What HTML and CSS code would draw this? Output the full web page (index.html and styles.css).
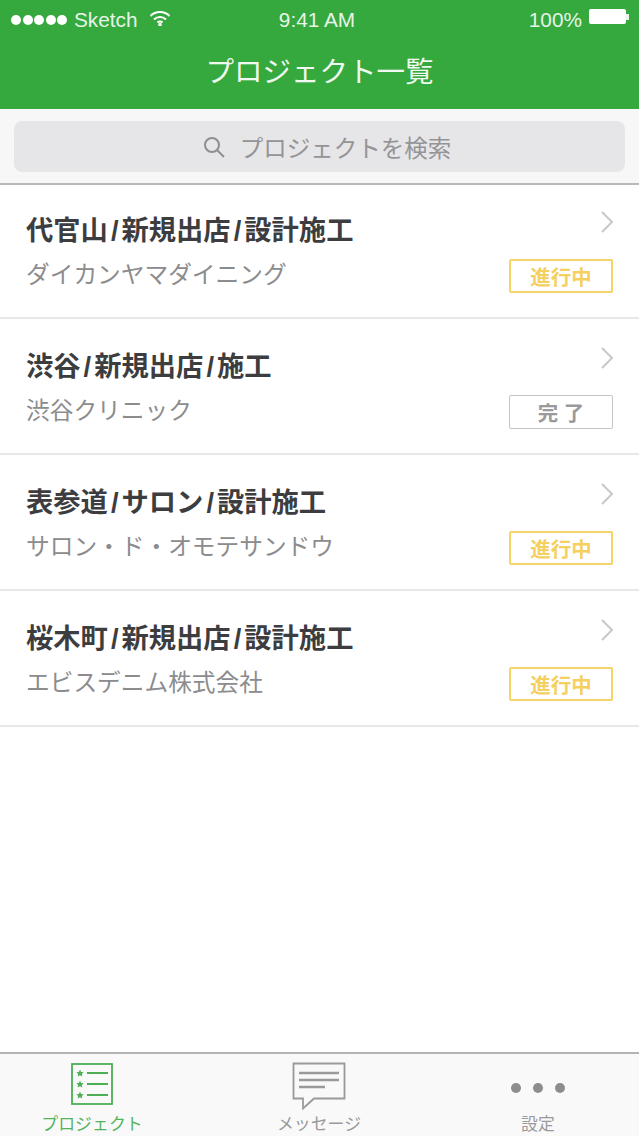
FILE: index.html
```html
<!DOCTYPE html>
<html lang="ja">
<head>
  <meta charset="UTF-8" />
  <title>プロジェクト一覧</title>
  <link rel="stylesheet" href="styles.css">
</head>
<body>
  <div class="app">
    <div class="header">
      <div class="status">
        <div class="status-left">
          <span class="dots"><i></i><i></i><i></i><i></i><i></i></span>
          <span>Sketch</span>
          <svg class="wifi" width="22" height="16" viewBox="0 0 22 16" fill="none" stroke="#fff" stroke-width="2">
            <path d="M1.500 6a13.500 13.500 0 0 1 19 0"/>
            <path d="M5 9.500a8.500 8.500 0 0 1 12 0"/>
            <path d="M8.500 12.500a3.500 3.500 0 0 1 5 0"/>
            <circle cx="11" cy="14.500" r="0.800" fill="#fff"/>
          </svg>
        </div>
        <div class="status-time">9:41 AM</div>
        <div class="status-right">
          <span>100%</span>
          <span class="battery"></span>
          <span class="battery-tip"></span>
        </div>
      </div>
      <h1 class="title">プロジェクト一覧</h1>
    </div>

    <div class="search-wrap">
      <div class="search">
        <svg width="24" height="24" viewBox="0 0 24 24" fill="none" stroke="#8e8e90" stroke-width="2">
          <circle cx="10" cy="10" r="7"/>
          <path d="M15 15l7 7"/>
        </svg>
        <span>プロジェクトを検索</span>
      </div>
    </div>

    <ul class="list">
      <li class="item">
        <div class="item-text">
          <div class="item-title">代官山<span class="slash">/</span>新規出店<span class="slash">/</span>設計施工</div>
          <div class="item-sub">ダイカンヤマダイニング</div>
        </div>
        <div class="item-side">
          <svg class="chevron" width="14" height="24" viewBox="0 0 14 24" fill="none" stroke="#c8c8cc" stroke-width="2"><path d="M2 2l10 10L2 22"/></svg>
          <span class="tag tag-active">進行中</span>
        </div>
      </li>
      <li class="item">
        <div class="item-text">
          <div class="item-title">渋谷<span class="slash">/</span>新規出店<span class="slash">/</span>施工</div>
          <div class="item-sub">渋谷クリニック</div>
        </div>
        <div class="item-side">
          <svg class="chevron" width="14" height="24" viewBox="0 0 14 24" fill="none" stroke="#c8c8cc" stroke-width="2"><path d="M2 2l10 10L2 22"/></svg>
          <span class="tag tag-done">完 了</span>
        </div>
      </li>
      <li class="item">
        <div class="item-text">
          <div class="item-title">表参道<span class="slash">/</span>サロン<span class="slash">/</span>設計施工</div>
          <div class="item-sub">サロン・ド・オモテサンドウ</div>
        </div>
        <div class="item-side">
          <svg class="chevron" width="14" height="24" viewBox="0 0 14 24" fill="none" stroke="#c8c8cc" stroke-width="2"><path d="M2 2l10 10L2 22"/></svg>
          <span class="tag tag-active">進行中</span>
        </div>
      </li>
      <li class="item">
        <div class="item-text">
          <div class="item-title">桜木町<span class="slash">/</span>新規出店<span class="slash">/</span>設計施工</div>
          <div class="item-sub">エビスデニム株式会社</div>
        </div>
        <div class="item-side">
          <svg class="chevron" width="14" height="24" viewBox="0 0 14 24" fill="none" stroke="#c8c8cc" stroke-width="2"><path d="M2 2l10 10L2 22"/></svg>
          <span class="tag tag-active">進行中</span>
        </div>
      </li>
    </ul>

    <div class="tabbar">
      <div class="tab tab-on">
        <svg class="tab-icon" width="44" height="44" viewBox="0 0 44 44" fill="none" stroke="#4cae55">
          <rect x="2" y="2" width="40" height="40" stroke-width="1.800"/>
          <path d="M17 11h21M17 22h21M17 33h21" stroke-width="1.800"/>
          <path d="M10 7.500l1.100 2.400 2.600.3-1.900 1.800.5 2.600L10 13.300l-2.300 1.300.5-2.600-1.900-1.800 2.600-.3z" fill="#4cae55" stroke="none"/>
          <path d="M10 18.500l1.100 2.400 2.600.3-1.900 1.800.5 2.600L10 24.300l-2.300 1.300.5-2.600-1.900-1.800 2.600-.3z" fill="#4cae55" stroke="none"/>
          <path d="M10 29.500l1.100 2.400 2.600.3-1.900 1.800.5 2.600L10 35.300l-2.300 1.300.5-2.600-1.900-1.800 2.600-.3z" fill="#4cae55" stroke="none"/>
        </svg>
        <span>プロジェクト</span>
      </div>
      <div class="tab">
        <svg class="tab-icon" width="54" height="48" viewBox="0 0 54 48" fill="none" stroke="#9a9a9c">
          <path d="M1.500 1.500h51v35H22l-11 10v-10H1.500z" stroke-width="1.800"/>
          <path d="M7 11h40M7 18h40M7 25h26" stroke-width="2.400"/>
        </svg>
        <span>メッセージ</span>
      </div>
      <div class="tab">
        <div class="more"><i></i><i></i><i></i></div>
        <span>設定</span>
      </div>
    </div>
  </div>
</body>
</html>
```

FILE: styles.css
```css
* {
  box-sizing: border-box;
}
html, body {
  margin: 0;
  padding: 0;
}
body {
  font-family: "Liberation Sans", "Noto Sans CJK JP", sans-serif;
  background: #fff;
  color: #3c3c3c;
}
.app {
  width: 639px;
  height: 1136px;
  display: flex;
  flex-direction: column;
  overflow: hidden;
}

/* header */
.header {
  height: 109px;
  background: #35a83e;
  color: #fff;
  flex-shrink: 0;
}
.status {
  height: 40px;
  display: grid;
  grid-template-columns: 1fr auto 1fr;
  align-items: center;
  padding: 0 10px 0 11px;
  font-size: 20.800px;
  color: #e6f5e7;
}
.status-left {
  display: flex;
  align-items: center;
  gap: 6px;
}
.dots {
  display: flex;
  gap: 1.500px;
  margin-right: 1px;
}
.dots i {
  width: 10px;
  height: 10px;
  border-radius: 50%;
  background: #fff;
}
.wifi {
  margin-left: 5px;
  margin-top: -5px;
}
.status-time {
  margin-right: 6px;
}
.status-right {
  display: flex;
  align-items: center;
  justify-content: flex-end;
}
.battery {
  width: 37px;
  height: 15px;
  background: #fff;
  margin-left: 7px;
  border-radius: 2px;
  margin-top: -7px;
}
.battery-tip {
  width: 3px;
  height: 6px;
  background: #e6f5e7;
  margin-top: -7px;
}
.title {
  margin: 0;
  font-size: 28.500px;
  font-weight: 400;
  line-height: 40px;
  margin-top: 12px;
  text-align: center;
  color: #f0f9f0;
}

/* search */
.search-wrap {
  height: 76px;
  flex-shrink: 0;
  background: #f7f7f8;
  padding: 12px 14px 0;
  border-bottom: 2px solid #b9b9bb;
}
.search {
  height: 51px;
  background: #e6e6e8;
  border-radius: 8px;
  display: flex;
  align-items: center;
  justify-content: center;
  gap: 14px;
  padding-left: 14px;
  font-size: 23.500px;
  color: #949496;
}

/* list */
.list {
  list-style: none;
  margin: -2px 0 0;
  padding: 0;
  flex: 1;
}
.item {
  height: 136px;
  border-bottom: 2px solid #e8e8ea;
  padding: 0 26px;
  display: flex;
  justify-content: space-between;
}
.item-text {
  padding-top: 29px;
}
.item-title {
  font-size: 27.300px;
  font-weight: 700;
  line-height: 38px;
  color: #3d3d3f;
}
.slash {
  padding: 0 3px;
}
.item-sub {
  font-size: 23.700px;
  line-height: 34px;
  margin-top: 8px;
  color: #8c8c8e;
}
.item-side {
  display: flex;
  flex-direction: column;
  align-items: flex-end;
  padding-top: 27px;
}
.chevron {
  margin-right: -1px;
}
.tag {
  width: 104px;
  height: 34px;
  margin-top: 25px;
  display: flex;
  align-items: center;
  justify-content: center;
  font-size: 20.500px;
  font-weight: 700;
  border: 2px solid;
  border-radius: 2px;
}
.tag-active {
  color: #f5d060;
  border-color: #f5d467;
}
.tag-done {
  color: #9a9a9c;
  border-color: #c4c4c8;
  border-width: 1.500px;
}

/* tab bar */
.tabbar {
  height: 84px;
  flex-shrink: 0;
  background: #f9f9fa;
  border-top: 2px solid #b4b4b6;
  display: grid;
  grid-template-columns: 184px 270px 168px;
  font-size: 16.900px;
  color: #9a9a9c;
}
.tab {
  display: flex;
  flex-direction: column;
  align-items: center;
  height: 82px;
  position: relative;
}
.tab span {
  position: absolute;
  top: 60px;
  line-height: 22px;
  white-space: nowrap;
}
.tab-on {
  color: #53b45b;
}
.tab-icon {
  margin-top: 8px;
}
.more {
  display: flex;
  gap: 12px;
  margin-top: 29px;
}
.more i {
  width: 10px;
  height: 10px;
  border-radius: 50%;
  background: #8d8d8f;
}
```
